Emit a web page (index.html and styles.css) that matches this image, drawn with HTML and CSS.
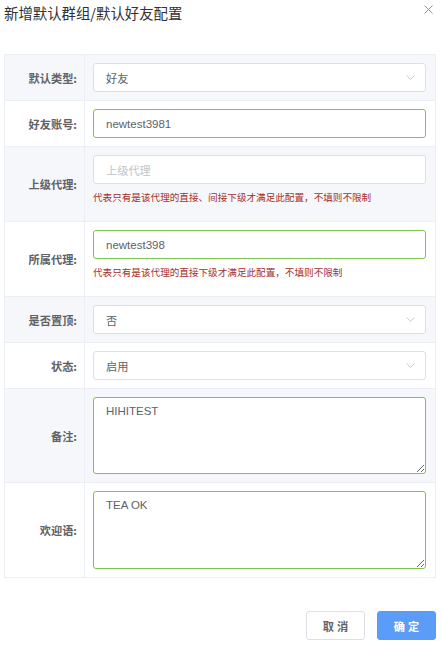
FILE: index.html
```html
<!DOCTYPE html>
<html lang="zh-CN">
<head>
<meta charset="utf-8">
<title>新增默认群组/默认好友配置</title>
<link rel="stylesheet" href="styles.css">
</head>
<body>
<div class="dialog">
  <div class="header">
    <span class="title">新增默认群组/默认好友配置</span>
    <span class="close" aria-label="close">
      <svg width="9" height="9" viewBox="0 0 9 9"><path d="M0.5 0.5L8.5 8.5M8.5 0.5L0.5 8.5" stroke="#909399" stroke-width="1" fill="none"/></svg>
    </span>
  </div>
  <table class="form">
    <tr class="odd">
      <th>默认类型:</th>
      <td><div class="select"><span>好友</span><svg class="arrow" width="9" height="5" viewBox="0 0 9 5"><path d="M0.5 0.5L4.5 4.3L8.5 0.5" stroke="#c0c4cc" stroke-width="0.9" fill="none"/></svg></div></td>
    </tr>
    <tr>
      <th>好友账号:</th>
      <td><div class="input ok">newtest3981</div></td>
    </tr>
    <tr class="odd">
      <th>上级代理:</th>
      <td><div class="input placeholder">上级代理</div><div class="hint">代表只有是该代理的直接、间接下级才满足此配置，不填则不限制</div></td>
    </tr>
    <tr>
      <th>所属代理:</th>
      <td><div class="input ok">newtest398</div><div class="hint">代表只有是该代理的直接下级才满足此配置，不填则不限制</div></td>
    </tr>
    <tr class="odd">
      <th>是否置顶:</th>
      <td><div class="select"><span>否</span><svg class="arrow" width="9" height="5" viewBox="0 0 9 5"><path d="M0.5 0.5L4.5 4.3L8.5 0.5" stroke="#c0c4cc" stroke-width="0.9" fill="none"/></svg></div></td>
    </tr>
    <tr>
      <th>状态:</th>
      <td><div class="select"><span>启用</span><svg class="arrow" width="9" height="5" viewBox="0 0 9 5"><path d="M0.5 0.5L4.5 4.3L8.5 0.5" stroke="#c0c4cc" stroke-width="0.9" fill="none"/></svg></div></td>
    </tr>
    <tr class="odd">
      <th>备注:</th>
      <td><textarea class="area ok a1">HIHITEST</textarea></td>
    </tr>
    <tr>
      <th>欢迎语:</th>
      <td><textarea class="area ok a2">TEA OK</textarea></td>
    </tr>
  </table>
  <div class="footer">
    <button class="btn cancel">取 消</button>
    <button class="btn primary">确 定</button>
  </div>
</div>
</body>
</html>
```
FILE: styles.css
```css
* { box-sizing: border-box; }
html, body { margin: 0; padding: 0; background: #fff; }
body {
  font-family: "Liberation Sans", "Noto Sans CJK SC", sans-serif;
  color: #606266;
}
.dialog { padding: 0 6px 0 4px; }
.header {
  height: 54px;
  display: flex;
  align-items: flex-start;
  justify-content: space-between;
  position: relative;
}
.title {
  font-family: "Noto Sans CJK SC", sans-serif;
  font-size: 14.4px;
  line-height: 20px;
  color: #303133;
  padding-top: 3px;
}
.close {
  position: absolute;
  right: 3px;
  top: 5px;
  width: 9px;
  height: 9px;
  display: block;
  line-height: 0;
}
.form {
  width: 432px;
  border-collapse: collapse;
  border: 1px solid #ebeef5;
}
.form th, .form td {
  border: 1px solid #ebeef5;
  padding: 8px 9px 8px 8px;
  vertical-align: middle;
}
.form th {
  width: 80px;
  text-align: right;
  padding-right: 7px;
  font-family: "Noto Sans CJK SC", sans-serif;
  font-size: 11.2px;
  font-weight: 700;
  color: #606266;
  white-space: nowrap;
}
.form tr.odd th, .form tr.odd td { background: #f5f7fa; }
.input, .select {
  height: 29px;
  border: 1px solid #dcdfe6;
  border-radius: 3px;
  background: #fff;
  padding: 0 12px;
  display: flex;
  align-items: center;
  font-size: 11.5px;
  color: #606266;
}
.select { justify-content: space-between; padding-right: 10px; }
.select span { font-family: "Noto Sans CJK SC", sans-serif; font-size: 11.2px; }
.input.ok, .area.ok { border-color: #7cc452; }
.input.placeholder {
  color: #c0c4cc;
  font-family: "Noto Sans CJK SC", sans-serif;
  font-size: 11.2px;
}
.hint {
  font-family: "Noto Sans CJK SC", sans-serif;
  font-size: 9.6px;
  line-height: 14px;
  color: #a52f2c;
  margin: 6px 0 9px;
  white-space: nowrap;
}
.area {
  display: block;
  width: 100%;
  border: 1px solid #dcdfe6;
  border-radius: 3px;
  background: #fff;
  padding: 5px 12px 4px;
  font-family: "Liberation Sans", sans-serif;
  font-size: 11.5px;
  line-height: 17px;
  color: #606266;
  resize: vertical;
  outline: none;
  margin: 0;
}
.a1 { height: 77px; }
.a2 { height: 78px; }
.footer {
  display: flex;
  justify-content: flex-end;
  gap: 12px;
  padding-top: 33px;
}
.btn {
  width: 59px;
  height: 29px;
  border-radius: 3px;
  font-family: "Liberation Sans", "Noto Sans CJK SC", sans-serif;
  font-size: 11.2px;
  font-weight: 700;
  padding: 0;
  margin: 0;
  cursor: pointer;
}
.cancel { background: #fff; border: 1px solid #dcdfe6; color: #606266; }
.primary { background: #5a9cf8; border: 1px solid #5a9cf8; color: #fff; }
```
